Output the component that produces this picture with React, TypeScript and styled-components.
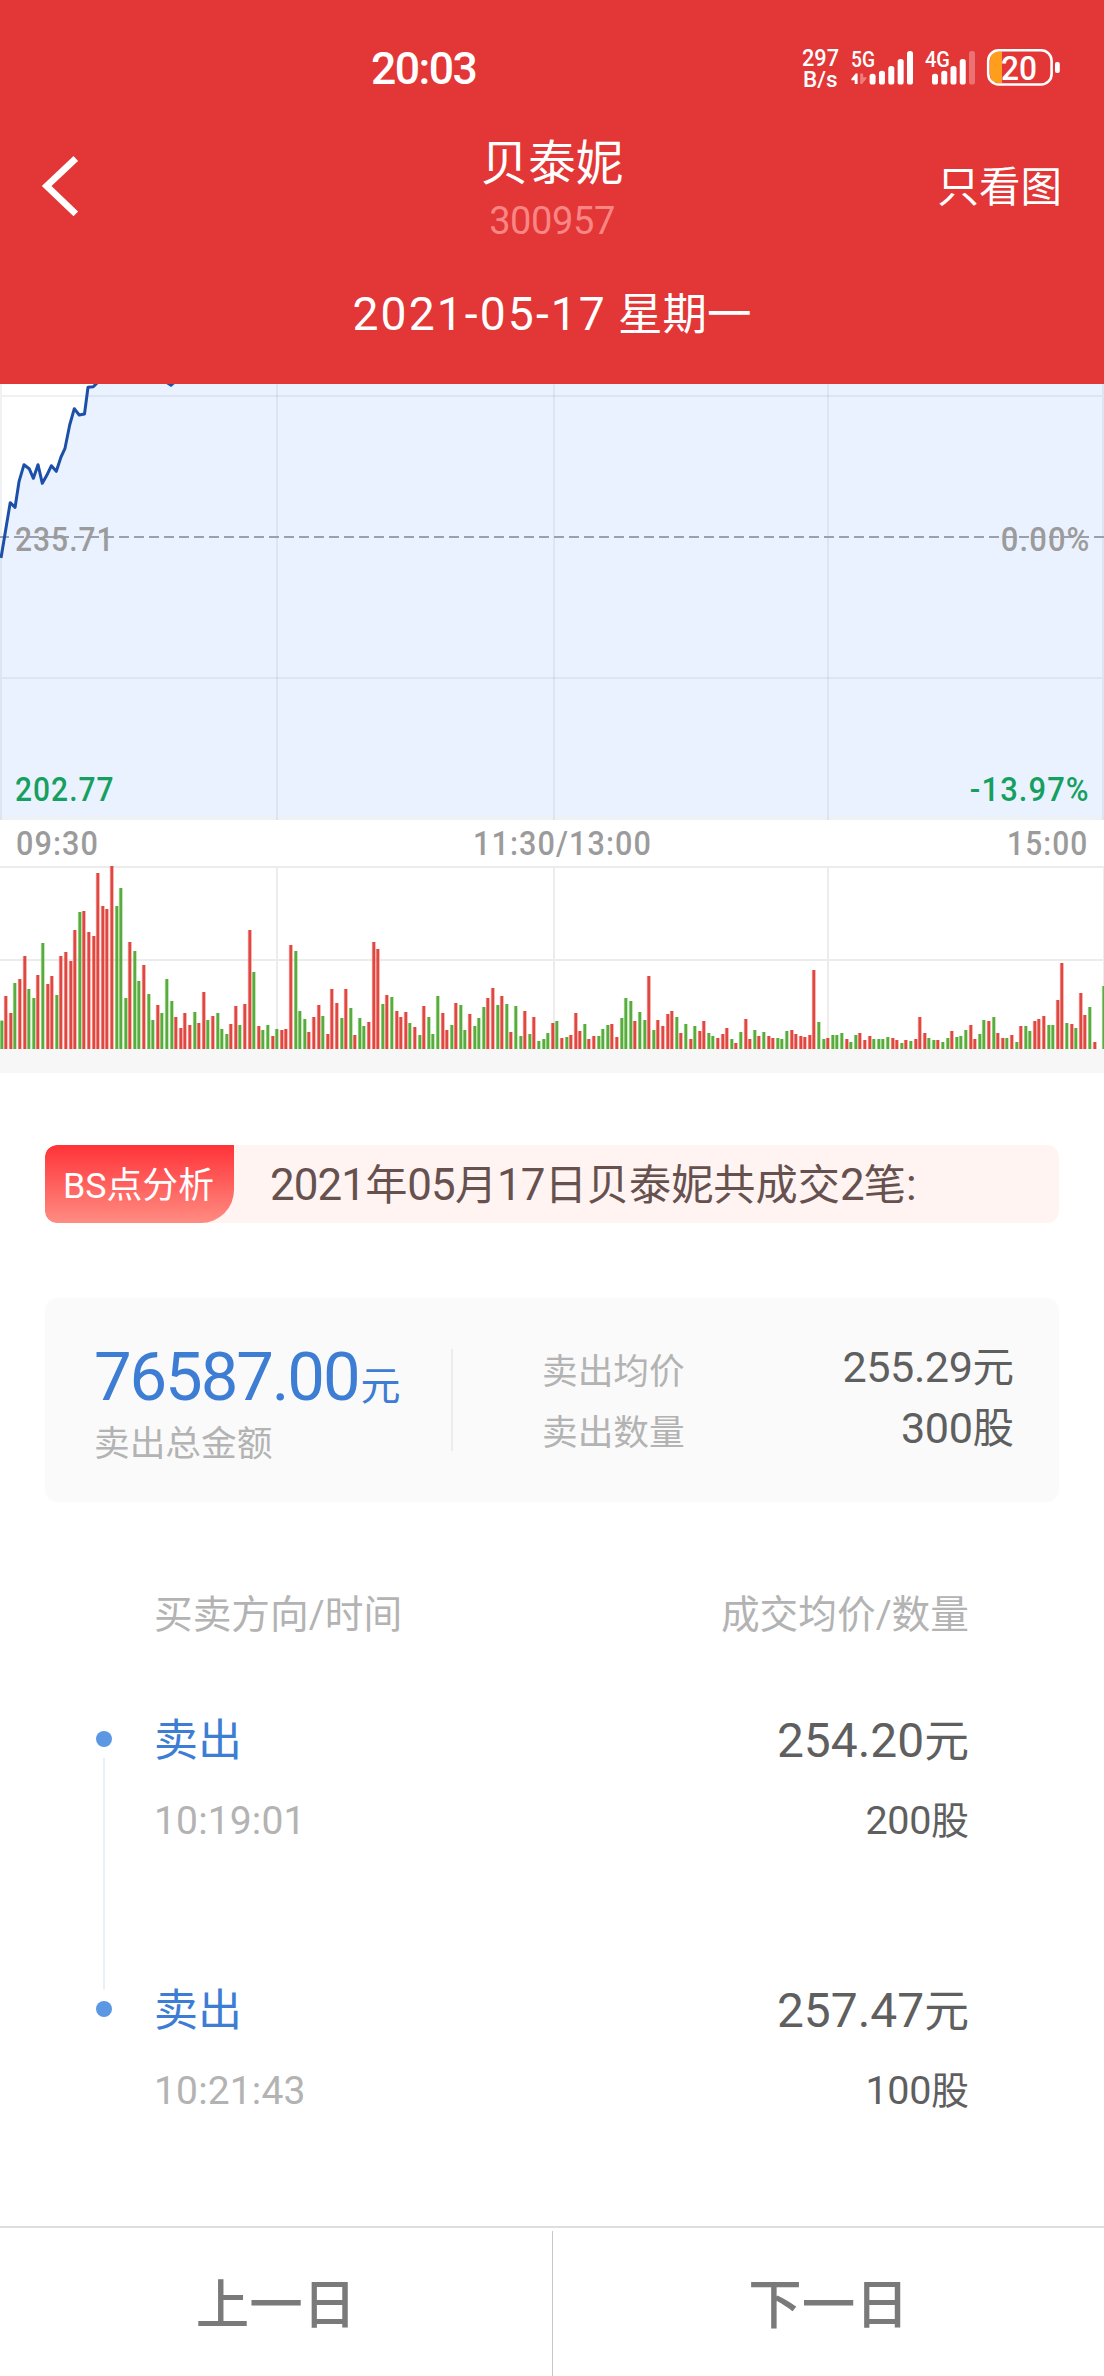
import React from 'react';
import styled, { createGlobalStyle } from 'styled-components';

const Global = createGlobalStyle`
  * { box-sizing: border-box; }
  html, body { margin: 0; padding: 0; background: #fff; }
  body { font-family: Roboto, "Noto Sans CJK SC", sans-serif; }
`;

const RED = '#e33636';
const BLUE = '#3d7dd3';

const Screen = styled.main`
  width: 1104px;
  height: 2376px;
  display: flex;
  flex-direction: column;
  overflow: hidden;
  background: #fff;
`;

/* Digits are set a little larger than the Chinese text beside them. */
const Digits = styled.span<{ $track?: number; $scale?: number }>`
  font-size: ${p => p.$scale ?? 1.04}em;
  letter-spacing: ${p => p.$track ?? -0.02}em;
`;

function Mixed({ text, track, scale }: { text: string; track?: number; scale?: number }) {
  return (
    <>
      {text.split(/([0-9.:\-]+)/).filter(Boolean).map((part, i) =>
        /^[0-9.:\-]+$/.test(part)
          ? <Digits key={i} $track={track} $scale={scale}>{part}</Digits>
          : <React.Fragment key={i}>{part}</React.Fragment>
      )}
    </>
  );
}

/* ---------- header ---------- */

const Header = styled.header`
  height: 384px;
  flex: none;
  display: flex;
  flex-direction: column;
  background: ${RED};
  color: #fff;
`;

const StatusBar = styled.div`
  height: 108px;
  padding: 30px 40px 0 371px;
  display: flex;
  justify-content: space-between;
`;

const Clock = styled.div`
  padding-top: 12px;
  font-size: 44.5px;
  line-height: 54px;
  font-weight: 500;
  letter-spacing: -1.5px;
`;

const StatusIcons = styled.svg`
  width: 268px;
  height: 70px;
  display: block;
  font-family: Roboto, sans-serif;
  font-weight: 500;
  fill: #fff;
`;

const NavBar = styled.div`
  height: 156px;
  padding: 0 42px 0 42px;
  display: grid;
  grid-template-columns: 1fr auto 1fr;
`;

const Back = styled.svg`
  width: 44px;
  height: 64px;
  margin: 46px 0 0 -2px;
  fill: none;
  stroke: #fff;
  stroke-width: 6.6;
`;

const TitleBlock = styled.div`
  display: flex;
  flex-direction: column;
  align-items: center;
`;

const StockName = styled.h1`
  margin: 26px 0 0;
  font-size: 47.5px;
  line-height: 60px;
  font-weight: 400;
`;

const StockCode = styled.div`
  margin-top: 5px;
  font-size: 38px;
  line-height: 44px;
  letter-spacing: -0.4px;
  color: #f98584;
`;

const ChartOnly = styled.div`
  margin-top: 55px;
  justify-self: end;
  font-size: 41.5px;
  line-height: 50px;
`;

const DateTitle = styled.div`
  margin-top: 18px;
  text-align: center;
  font-size: 44.5px;
  line-height: 64px;
  white-space: pre;
`;

/* ---------- charts ---------- */

const PricePanel = styled.section`
  height: 436px;
  flex: none;
  position: relative;
`;

const Plot = styled.svg`
  display: block;
  width: 100%;
  height: 100%;
`;

const AxisLabel = styled.span<{ $color?: string }>`
  display: inline-block;
  font-size: 34px;
  line-height: 40px;
  font-weight: 500;
  letter-spacing: 1.2px;
  color: ${p => p.$color ?? '#9b9b9b'};
  transform: scaleX(0.88);
`;

const OverLabel = styled(AxisLabel)<{ $top: number; $end?: boolean }>`
  position: absolute;
  top: ${p => p.$top}px;
  ${p => (p.$end ? 'right: 14px; transform: scaleX(0.91);' : 'left: 15px;')}
  transform-origin: ${p => (p.$end ? 'right' : 'left')};
`;

const TimeAxis = styled.div`
  height: 46px;
  flex: none;
  padding: 3px 16px 0 16px;
  display: grid;
  grid-template-columns: 1fr auto 1fr;
`;

const AxisTime = styled(AxisLabel)<{ $side: 'left' | 'center' | 'right' }>`
  justify-self: ${p => (p.$side === 'left' ? 'start' : p.$side === 'right' ? 'end' : 'center')};
  margin-left: ${p => (p.$side === 'center' ? 20 : 0)}px;
  transform-origin: ${p => p.$side};
  transform: scaleX(${p => (p.$side === 'right' ? 0.88 : 0.9)});
`;

const VolumePanel = styled.section`
  height: 183px;
  flex: none;
`;

const Band = styled.div`
  height: 24px;
  flex: none;
  background: #f7f7f7;
`;

const LINE_POINTS: [number, number][] = [
  [1, 174], [10.2, 118.7], [15.1, 123.3], [19, 97.7], [24, 80.7], [29.2, 84.7], [33.4, 94.3],
  [38, 80.7], [42.3, 99.3], [46.8, 91.3], [51.4, 81.7], [56.3, 87.3], [61, 73], [65, 64.3],
  [69.7, 41], [74.3, 24.7], [79.2, 31], [84.5, 30], [88, 3.3], [93.3, 2.7], [98, -2],
];

function PriceChart() {
  const pts = LINE_POINTS.map(p => p.join(',')).join(' ');
  return (
    <Plot viewBox="0 0 1104 436">
      <polygon points={`0,174 ${pts} 1104,-2 1104,433 0,433`} fill="#ebf2ff" />
      <g fill="#28405f" fillOpacity="0.075">
        <rect x="0" y="0" width="2" height="436" />
        <rect x="276" y="0" width="2" height="436" />
        <rect x="553" y="0" width="2" height="436" />
        <rect x="827" y="0" width="2" height="436" />
        <rect x="1102" y="0" width="2" height="436" />
        <rect x="2" y="11" width="1100" height="2" />
        <rect x="2" y="293" width="1100" height="2" />
        <rect x="0" y="433" width="1104" height="3" />
      </g>
      <line x1="-1" x2="1104" y1="153" y2="153" stroke="#9aa0ae" strokeWidth="2" strokeDasharray="10 5" />
      <polyline points={pts} fill="none" stroke="#1c50a8" strokeWidth="3" strokeLinejoin="round" />
      <path d="M167 -1 L171 1.5 L174 -1" fill="none" stroke="#1c50a8" strokeWidth="2.4" />
    </Plot>
  );
}

/* One entry a minute: g = falling, r = rising, then the volume in thirds of a pixel. */
const VOLUME = (
  'g85 r159 r108 g198 r210 r279 g180 g153 r222 g318 r195 r219 g162 r279 r291 r264 r357 g411 r414 r351 ' +
  'r339 r528 r429 r420 r549 g429 g483 g153 r321 g294 g204 r252 g165 g87 r132 g108 g210 g144 r96 r63 ' +
  'r108 r72 g111 r78 r171 g87 r99 g108 g60 g45 r75 r129 g72 r135 r357 g231 r69 g57 g72 r39 ' +
  'g60 r57 r60 r312 g294 g114 g90 r51 r96 r132 g99 r45 r180 r138 g93 r180 g123 r42 g93 g69 ' +
  'r81 r321 r300 g135 r162 g156 r114 r96 r111 g78 r66 g42 r129 g96 g45 g159 r108 r57 g72 r138 ' +
  'g132 g57 r105 g69 g93 g126 r153 r183 g132 r159 g135 r51 g129 g39 r114 g45 r96 g24 g30 g48 ' +
  'r78 g84 r33 g36 r42 r108 r54 g75 r30 r39 g39 g60 g72 r75 r36 g93 g153 g144 r84 g111 ' +
  'g87 r219 g57 r87 r69 r105 r114 g96 r48 g75 r30 g69 r54 r84 g48 g39 r33 r45 r63 g30 ' +
  'r18 g51 r90 r30 g57 r39 g51 r39 r33 g33 g30 g54 r57 r45 r39 r36 r42 r237 g81 g30 ' +
  'r33 g42 g42 g48 r30 g21 g42 r48 r27 r39 g30 g30 g30 g36 r33 r27 g18 r27 g24 r30 ' +
  'r96 r48 g33 g27 r27 g21 g33 r54 g36 g39 g57 r72 r30 g45 g87 r84 g96 r48 r33 g33 ' +
  'r42 g21 r69 g69 g54 r84 r90 r99 g72 g72 r147 r258 g78 r75 g63 r168 r102 g126 r21 g0 g189'
).split(' ');

function VolumeChart() {
  const bars = VOLUME.map((v, i) => ({
    up: v[0] === 'r',
    h: Number(v.slice(1)) / 3,
    x: Math.round(0.7 + i * 4.592),
  })).filter(b => b.h > 0);
  return (
    <Plot viewBox="0 0 1104 183">
      <g fill="#ececec">
        <rect x="0" y="0" width="1104" height="2" />
        <rect x="0" y="93" width="1104" height="2" />
        <rect x="276" y="0" width="2" height="183" />
        <rect x="553" y="0" width="2" height="183" />
        <rect x="827" y="0" width="2" height="183" />
        <rect x="1103" y="0" width="1" height="183" />
      </g>
      {bars.map(b => (
        <rect key={`s${b.x}`} x={b.x - 1.2} y={183 - b.h} width="4" height={b.h} fill={b.up ? '#ff5a50' : '#6fd84a'} fillOpacity="0.45" />
      ))}
      {bars.map(b => (
        <rect key={b.x} x={b.x - 0.5} y={183 - b.h} width="2.6" height={b.h} fill={b.up ? '#dc4842' : '#5aa943'} />
      ))}
    </Plot>
  );
}

/* ---------- analysis ---------- */

const Banner = styled.section`
  height: 78px;
  flex: none;
  margin: 72px 45px 0;
  display: flex;
  border-radius: 12px;
  overflow: hidden;
  background: #fff4f2;
`;

const Tag = styled.div`
  width: 189px;
  padding-left: 18px;
  font-size: 35.8px;
  line-height: 82px;
  color: #fff;
  white-space: nowrap;
  border-radius: 12px 0 33px 12px;
  background: linear-gradient(#ff3338, #ff8c82);
`;

const BannerText = styled.div`
  padding-left: 36px;
  font-size: 42.2px;
  line-height: 80px;
  color: #66514f;
  white-space: nowrap;
`;

const SummaryCard = styled.section`
  height: 204px;
  flex: none;
  margin: 75px 45px 0;
  padding: 51px 45px 0 49px;
  display: flex;
  border-radius: 12px;
  background: #fafafa;
`;

const Total = styled.div`
  width: 359px;
  height: 102px;
  border-right: 2px solid #ececec;
`;

const TotalAmount = styled.div`
  height: 64px;
  font-size: 67px;
  line-height: 57px;
  letter-spacing: -2.1px;
  color: ${BLUE};
  white-space: nowrap;
`;

const Unit = styled.span`
  font-size: 40px;
  letter-spacing: 0;
  margin-left: 2px;
`;

const Caption = styled.div`
  font-size: 35.7px;
  line-height: 62px;
  color: #b3b3b3;
  white-space: nowrap;
`;

const Stats = styled.div`
  flex: 1;
  padding-left: 89px;
`;

const StatRow = styled.div`
  height: 61px;
  margin-top: -8px;
  & + & { margin-top: 0; }
  display: flex;
  justify-content: space-between;
`;

const StatValue = styled.div`
  font-size: 41.5px;
  line-height: 54px;
  color: #5f5f5f;
`;

/* ---------- trades ---------- */

const Trades = styled.section`
  height: 724px;
  flex: none;
  padding: 86px 135px 0 93px;
`;

const TradesHead = styled.div`
  display: flex;
  justify-content: space-between;
  padding-left: 61px;
  font-size: 38.7px;
  line-height: 54px;
  color: #b3b3b3;
`;

const Trade = styled.div`
  height: 270px;
  display: flex;
`;

const TradeList = styled.div`
  padding-top: 69px;
`;

const Rail = styled.div`
  width: 21px;
  padding-top: 20px;
  display: flex;
  flex-direction: column;
  align-items: center;
`;

const Dot = styled.i`
  flex: none;
  width: 16px;
  height: 16px;
  border-radius: 50%;
  background: #5c97e3;
`;

const Connector = styled.i`
  flex: none;
  width: 2px;
  height: 231px;
  margin-top: 11px;
  background: #e9eff5;
`;

const TradeCell = styled.div<{ $end?: boolean }>`
  flex: 1;
  padding-left: ${p => (p.$end ? 0 : 40)}px;
  text-align: ${p => (p.$end ? 'right' : 'left')};
`;

const Side = styled.div`
  font-size: 44px;
  line-height: 60px;
  color: ${BLUE};
`;

const Price = styled.div`
  height: 60px;
  font-size: 44.8px;
  line-height: 60px;
  color: #5f5f5f;
`;

const TradeTime = styled.div`
  margin-top: 20px;
  font-size: 39px;
  line-height: 60px;
  letter-spacing: 0.15px;
  color: #b3b3b3;
`;

const Quantity = styled.div`
  margin-top: 20px;
  font-size: 38px;
  line-height: 60px;
  color: #5f5f5f;
`;

/* ---------- footer ---------- */

const Footer = styled.footer`
  flex: 1;
  display: grid;
  grid-template-columns: 1fr 1fr;
  border-top: 2px solid #dedede;
`;

const DayButton = styled.button`
  border: 0;
  padding: 0 0 4px;
  background: none;
  font: 500 53.5px "Noto Sans CJK SC", sans-serif;
  color: #7a7a7a;
  & + & {
    border-left: 1px solid #c8c8c8;
    margin-top: 3px;
    padding-bottom: 7px;
  }
`;

const TRADES = [
  { side: '卖出', time: '10:19:01', price: '254.20元', qty: '200股' },
  { side: '卖出', time: '10:21:43', price: '257.47元', qty: '100股' },
];

function SignalIcons() {
  const tops = [43.7, 40.7, 36, 29, 21];
  return (
    <StatusIcons viewBox="0 0 268 70">
      <text x="6" y="36" fontSize="23.5" textLength="37" lengthAdjust="spacingAndGlyphs">297</text>
      <text x="7" y="57" fontSize="22.5" textLength="34.5" lengthAdjust="spacingAndGlyphs">B/s</text>
      <text x="55" y="37" fontSize="22.5" textLength="24" lengthAdjust="spacingAndGlyphs">5G</text>
      <text x="129" y="37" fontSize="22.5" textLength="25" lengthAdjust="spacingAndGlyphs">4G</text>
      <path d="M61.6 54V43.5h-1.9l-4.4 5.5v1.2h3.4V54z" />
      <path d="M64.2 43.5V54h1.9l4.4-5.5v-1.2h-3.4v-3.8z" opacity="0.35" />
      {tops.map((t, i) => (
        <rect key={`a${i}`} x={73.6 + i * 9.35} y={t} width="6" height={54.5 - t} rx="2.6" />
      ))}
      {tops.map((t, i) => (
        <rect key={`b${i}`} x={136 + i * 9.25} y={t} width="6" height={54.5 - t} rx="2.6" opacity={i === 4 ? 0.3 : 1} />
      ))}
      <path d="M206 21.5h-4a8 8 0 0 0-8 8v15.5a8 8 0 0 0 8 8h4z" fill="#ff9d1c" />
      <rect x="192.2" y="20.3" width="63.4" height="34.2" rx="10.5" fill="none" stroke="#fff" strokeWidth="2.6" />
      <rect x="259" y="32" width="4.8" height="11" rx="2" />
      <text x="205" y="49.5" fontSize="32.5" textLength="36" lengthAdjust="spacingAndGlyphs">20</text>
    </StatusIcons>
  );
}

export default function App() {
  return (
    <Screen>
      <Global />
      <Header>
        <StatusBar>
          <Clock>20:03</Clock>
          <SignalIcons />
        </StatusBar>
        <NavBar>
          <Back viewBox="0 0 44 64"><path d="M35.8 4.5 L6.6 32 L35.8 59.8" /></Back>
          <TitleBlock>
            <StockName>贝泰妮</StockName>
            <StockCode>300957</StockCode>
          </TitleBlock>
          <ChartOnly>只看图</ChartOnly>
        </NavBar>
        <DateTitle><Mixed text="2021-05-17 星期一" track={0.045} /></DateTitle>
      </Header>

      <PricePanel>
        <PriceChart />
        <OverLabel $top={135}>235.71</OverLabel>
        <OverLabel $top={135} $end>0.00%</OverLabel>
        <OverLabel $top={385} $color="#16a05f">202.77</OverLabel>
        <OverLabel $top={385} $end $color="#16a05f">-13.97%</OverLabel>
      </PricePanel>
      <TimeAxis>
        <AxisTime $side="left">09:30</AxisTime>
        <AxisTime $side="center">11:30/13:00</AxisTime>
        <AxisTime $side="right">15:00</AxisTime>
      </TimeAxis>
      <VolumePanel><VolumeChart /></VolumePanel>
      <Band />

      <Banner>
        <Tag>BS点分析</Tag>
        <BannerText><Mixed text="2021年05月17日贝泰妮共成交2笔:" /></BannerText>
      </Banner>

      <SummaryCard>
        <Total>
          <TotalAmount>76587.00<Unit>元</Unit></TotalAmount>
          <Caption>卖出总金额</Caption>
        </Total>
        <Stats>
          <StatRow>
            <Caption>卖出均价</Caption>
            <StatValue><Mixed text="255.29元" track={-0.01} /></StatValue>
          </StatRow>
          <StatRow>
            <Caption>卖出数量</Caption>
            <StatValue><Mixed text="300股" track={-0.01} /></StatValue>
          </StatRow>
        </Stats>
      </SummaryCard>

      <Trades>
        <TradesHead>
          <span>买卖方向/时间</span>
          <span>成交均价/数量</span>
        </TradesHead>
        <TradeList>
          {TRADES.map((t, i) => (
            <Trade key={t.time}>
              <Rail>
                <Dot />
                {i < TRADES.length - 1 && <Connector />}
              </Rail>
              <TradeCell>
                <Side>{t.side}</Side>
                <TradeTime>{t.time}</TradeTime>
              </TradeCell>
              <TradeCell $end>
                <Price><Mixed text={t.price} scale={1.07} track={0} /></Price>
                <Quantity><Mixed text={t.qty} track={-0.01} /></Quantity>
              </TradeCell>
            </Trade>
          ))}
        </TradeList>
      </Trades>

      <Footer>
        <DayButton>上一日</DayButton>
        <DayButton>下一日</DayButton>
      </Footer>
    </Screen>
  );
}
